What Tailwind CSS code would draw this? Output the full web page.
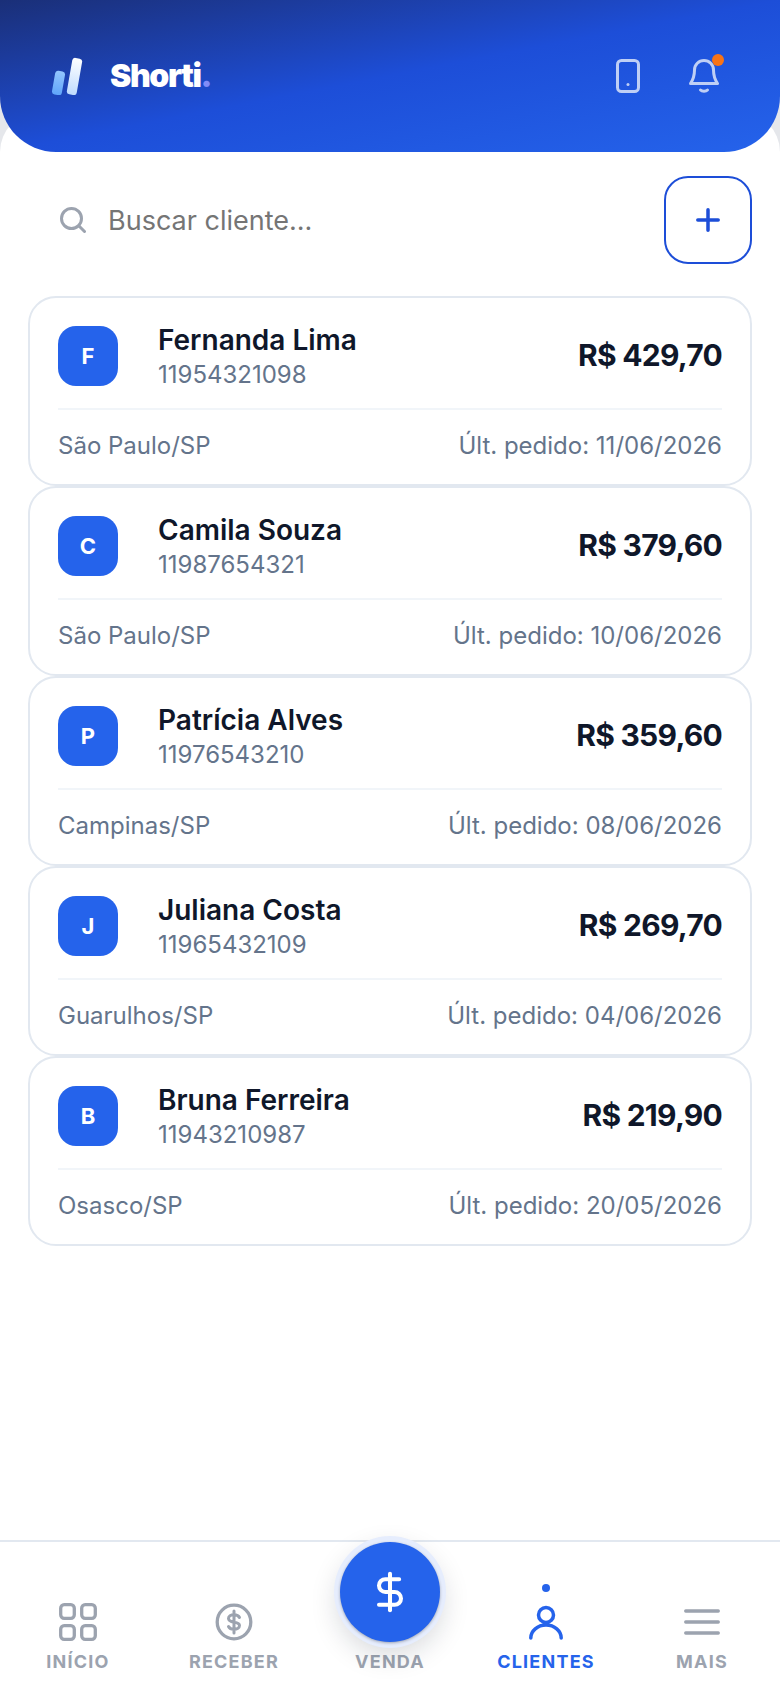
<!DOCTYPE html>
<html lang="pt-BR">
<head>
  <meta charset="UTF-8" />
  <meta name="viewport" content="width=device-width, initial-scale=1.0" />
  <title>Clientes</title>
  <script src="https://cdn.jsdelivr.net/npm/@tailwindcss/browser@4"></script>
</head>
<body class="bg-[#e5e7eb] font-['Inter',sans-serif]">
  <div class="relative w-[780px] h-[1688px] overflow-hidden flex flex-col">

    <!-- Topo -->
    <header class="relative z-10 h-[152px] shrink-0 rounded-b-[56px] bg-gradient-to-br from-[#1a2f78] via-[#1d4ed8] to-[#2563eb] flex items-center justify-between pl-[51px] pr-[61px]">
      <div class="flex items-center gap-[27px]">
        <svg width="32" height="38" viewBox="0 0 32 38">
          <defs>
            <linearGradient id="b1" x1="0" y1="0" x2="0" y2="1"><stop offset="0" stop-color="#93c5fd"/><stop offset="1" stop-color="#60a5fa"/></linearGradient>
            <linearGradient id="b2" x1="0" y1="0" x2="0" y2="1"><stop offset="0" stop-color="#ffffff"/><stop offset="1" stop-color="#bfdbfe"/></linearGradient>
          </defs>
          <rect x="2.500" y="14" width="10" height="24" rx="3" transform="rotate(10 7.500 26)" fill="url(#b1)"/>
          <rect x="18.500" y="1" width="10" height="37" rx="3" transform="rotate(10 23.500 19.500)" fill="url(#b2)"/>
        </svg>
        <span class="text-[32px] font-black tracking-[-1.4px] text-white leading-none">Shorti<span class="text-[#818cf8]">.</span></span>
      </div>
      <div class="flex items-center gap-[49px]">
        <svg width="24" height="34" viewBox="0 0 24 34" fill="none" stroke="#bfcff5" stroke-width="3" stroke-linecap="round" stroke-linejoin="round">
          <rect x="1.500" y="1.500" width="21" height="31" rx="4"/>
          <path d="M12 25.500h.01"/>
        </svg>
        <div class="relative">
          <svg class="block" width="30" height="34" viewBox="0 0 30 34" fill="none" stroke="#bfcff5" stroke-width="3" stroke-linecap="round" stroke-linejoin="round">
            <path d="M5.500 11a9.500 9.500 0 0 1 19 0c0 6 1 9 4 13.500H1.500c3-4.500 4-7.500 4-13.500Z"/>
            <path d="M11.500 31c1.500 1.500 5.500 1.500 7 0"/>
          </svg>
          <span class="absolute right-[-5px] top-[-5px] size-3 rounded-full bg-[#f97316]"></span>
        </div>
      </div>
    </header>

    <!-- Conteudo -->
    <main class="flex-1 bg-white rounded-t-[40px] -mt-[40px] pt-[40px] px-[28px] flex flex-col">
      <div class="flex items-center justify-between mt-[24px] mb-[32px]">
        <div class="flex items-center gap-[22px] pl-[32px]">
          <svg width="26" height="26" viewBox="0 0 26 26" fill="none" stroke="#9ca3af" stroke-width="3" stroke-linecap="round">
            <circle cx="11.500" cy="11.500" r="10"/>
            <path d="m18.800 18.800 5.700 5.700"/>
          </svg>
          <span class="text-[27px] text-[#757575] leading-none">Buscar cliente...</span>
        </div>
        <button class="size-[88px] rounded-[24px] border-2 border-[#1d4ed8] bg-white flex items-center justify-center">
          <svg width="26" height="26" viewBox="0 0 26 26" fill="none" stroke="#1d4ed8" stroke-width="3.500" stroke-linecap="round"><path d="M13 2.800v20.400M2.800 13h20.400"/></svg>
        </button>
      </div>

      <div class="flex flex-col">
        <article class="h-[190px] rounded-[28px] border-2 border-[#e2e8f0] px-[28px] pt-[28px] flex flex-col">
          <div class="flex items-center h-[60px]">
            <div class="size-[60px] rounded-[18px] bg-[#2563eb] flex items-center justify-center text-[22px] font-bold text-white mr-[40px]">F</div>
            <div class="flex-1 pb-[1px]">
              <p class="text-[28px] leading-[34px] font-semibold text-[#0f172a]">Fernanda Lima</p>
              <p class="text-[24px] leading-[28px] mt-[4px] text-[#64748b]">11954321098</p>
            </div>
            <p class="pb-[2px] text-[30px] font-bold tracking-tight text-[#0f172a]">R$ 429,70</p>
          </div>
          <div class="mt-[22px] border-t-2 border-[#f1f5f9] pt-[20px] flex justify-between text-[24px] leading-[32px] text-[#64748b]">
            <span>São Paulo/SP</span><span>Últ. pedido: 11/06/2026</span>
          </div>
        </article>
        <article class="h-[190px] rounded-[28px] border-2 border-[#e2e8f0] px-[28px] pt-[28px] flex flex-col">
          <div class="flex items-center h-[60px]">
            <div class="size-[60px] rounded-[18px] bg-[#2563eb] flex items-center justify-center text-[22px] font-bold text-white mr-[40px]">C</div>
            <div class="flex-1 pb-[1px]">
              <p class="text-[28px] leading-[34px] font-semibold text-[#0f172a]">Camila Souza</p>
              <p class="text-[24px] leading-[28px] mt-[4px] text-[#64748b]">11987654321</p>
            </div>
            <p class="pb-[2px] text-[30px] font-bold tracking-tight text-[#0f172a]">R$ 379,60</p>
          </div>
          <div class="mt-[22px] border-t-2 border-[#f1f5f9] pt-[20px] flex justify-between text-[24px] leading-[32px] text-[#64748b]">
            <span>São Paulo/SP</span><span>Últ. pedido: 10/06/2026</span>
          </div>
        </article>
        <article class="h-[190px] rounded-[28px] border-2 border-[#e2e8f0] px-[28px] pt-[28px] flex flex-col">
          <div class="flex items-center h-[60px]">
            <div class="size-[60px] rounded-[18px] bg-[#2563eb] flex items-center justify-center text-[22px] font-bold text-white mr-[40px]">P</div>
            <div class="flex-1 pb-[1px]">
              <p class="text-[28px] leading-[34px] font-semibold text-[#0f172a]">Patrícia Alves</p>
              <p class="text-[24px] leading-[28px] mt-[4px] text-[#64748b]">11976543210</p>
            </div>
            <p class="pb-[2px] text-[30px] font-bold tracking-tight text-[#0f172a]">R$ 359,60</p>
          </div>
          <div class="mt-[22px] border-t-2 border-[#f1f5f9] pt-[20px] flex justify-between text-[24px] leading-[32px] text-[#64748b]">
            <span>Campinas/SP</span><span>Últ. pedido: 08/06/2026</span>
          </div>
        </article>
        <article class="h-[190px] rounded-[28px] border-2 border-[#e2e8f0] px-[28px] pt-[28px] flex flex-col">
          <div class="flex items-center h-[60px]">
            <div class="size-[60px] rounded-[18px] bg-[#2563eb] flex items-center justify-center text-[22px] font-bold text-white mr-[40px]">J</div>
            <div class="flex-1 pb-[1px]">
              <p class="text-[28px] leading-[34px] font-semibold text-[#0f172a]">Juliana Costa</p>
              <p class="text-[24px] leading-[28px] mt-[4px] text-[#64748b]">11965432109</p>
            </div>
            <p class="pb-[2px] text-[30px] font-bold tracking-tight text-[#0f172a]">R$ 269,70</p>
          </div>
          <div class="mt-[22px] border-t-2 border-[#f1f5f9] pt-[20px] flex justify-between text-[24px] leading-[32px] text-[#64748b]">
            <span>Guarulhos/SP</span><span>Últ. pedido: 04/06/2026</span>
          </div>
        </article>
        <article class="h-[190px] rounded-[28px] border-2 border-[#e2e8f0] px-[28px] pt-[28px] flex flex-col">
          <div class="flex items-center h-[60px]">
            <div class="size-[60px] rounded-[18px] bg-[#2563eb] flex items-center justify-center text-[22px] font-bold text-white mr-[40px]">B</div>
            <div class="flex-1 pb-[1px]">
              <p class="text-[28px] leading-[34px] font-semibold text-[#0f172a]">Bruna Ferreira</p>
              <p class="text-[24px] leading-[28px] mt-[4px] text-[#64748b]">11943210987</p>
            </div>
            <p class="pb-[2px] text-[30px] font-bold tracking-tight text-[#0f172a]">R$ 219,90</p>
          </div>
          <div class="mt-[22px] border-t-2 border-[#f1f5f9] pt-[20px] flex justify-between text-[24px] leading-[32px] text-[#64748b]">
            <span>Osasco/SP</span><span>Últ. pedido: 20/05/2026</span>
          </div>
        </article>
      </div>
    </main>

    <!-- Navegacao -->
    <nav class="relative h-[148px] shrink-0 bg-white border-t-2 border-[#e2e8f0] grid grid-cols-5 text-[18px] font-bold tracking-[1.2px] text-[#9ca3af]">
      <div class="flex flex-col items-center justify-end pb-[13px] gap-[6px]">
        <svg width="40" height="40" viewBox="0 0 40 40" fill="none" stroke="#9ca3af" stroke-width="3.300"><rect x="2.700" y="2.700" width="13.600" height="13.600" rx="3.500"/><rect x="23.700" y="2.700" width="13.600" height="13.600" rx="3.500"/><rect x="2.700" y="23.700" width="13.600" height="13.600" rx="3.500"/><rect x="23.700" y="23.700" width="13.600" height="13.600" rx="3.500"/></svg>
        <span>INÍCIO</span>
      </div>
      <div class="flex flex-col items-center justify-end pb-[13px] gap-[6px]">
        <svg width="40" height="40" viewBox="0 0 40 40" fill="none" stroke="#9ca3af" stroke-width="3.300" stroke-linecap="round"><circle cx="20" cy="20" r="16.800"/><path stroke-width="3" d="M25.500 15.500c-.8-1.700-2.800-2.700-5.500-2.700-3.200 0-5.500 1.600-5.500 3.700 0 5.500 11 2 11 7 0 2.100-2.300 3.700-5.500 3.700-2.700 0-4.700-1-5.500-2.700M20 9v22"/></svg>
        <span>RECEBER</span>
      </div>
      <div class="flex flex-col items-center justify-end pb-[13px]">
        <span>VENDA</span>
      </div>
      <div class="relative flex flex-col items-center justify-end pb-[13px] gap-[6px] text-[#2563eb]">
        <span class="absolute top-[42px] size-2 rounded-full bg-[#2563eb]"></span>
        <svg width="40" height="40" viewBox="0 0 40 40" fill="none" stroke="#2563eb" stroke-width="3.500" stroke-linecap="round"><circle cx="20" cy="13" r="7.500"/><path d="M4.800 36a15.200 13 0 0 1 30.400 0"/></svg>
        <span>CLIENTES</span>
      </div>
      <div class="flex flex-col items-center justify-end pb-[13px] gap-[6px]">
        <svg width="40" height="40" viewBox="0 0 40 40" fill="none" stroke="#9ca3af" stroke-width="3.300" stroke-linecap="round"><path d="M3.700 9h32.600M3.700 20h32.600M3.700 31h32.600"/></svg>
        <span>MAIS</span>
      </div>
      <button class="absolute left-[340px] top-0 size-[100px] rounded-full bg-[#2563eb] shadow-[0_1px_3px_rgba(15,23,42,0.35),0_0_0_6px_#e6edfd,0_10px_30px_rgba(15,23,42,0.2)] flex items-center justify-center">
        <svg width="44" height="44" viewBox="0 0 24 24" fill="none" stroke="white" stroke-width="2.200" stroke-linecap="round" stroke-linejoin="round"><path d="M12 2v20"/><path d="M17 5H9.500a3.500 3.500 0 0 0 0 7h5a3.500 3.500 0 0 1 0 7H6"/></svg>
      </button>
    </nav>
  </div>
</body>
</html>
